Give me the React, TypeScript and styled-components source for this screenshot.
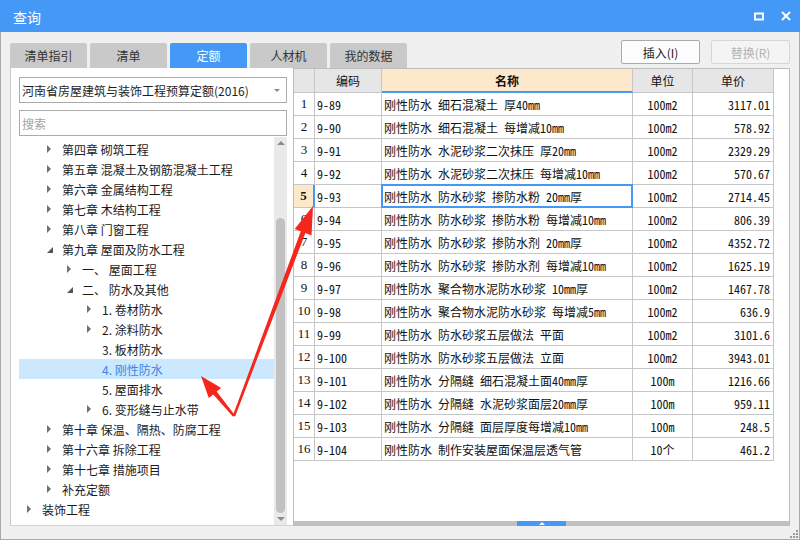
import React from 'react'
import styled, { createGlobalStyle, css } from 'styled-components'

const BLUE = '#4499f6'
const UI_FONT = `"Noto Sans CJK SC", "Noto Sans", sans-serif`
const GRID_FONT = `"Noto Sans Mono CJK SC", "Noto Sans CJK SC", monospace`
const LINE = '#c6c6c6'

const GlobalStyle = createGlobalStyle`
    html, body { margin: 0; padding: 0; background: #f0f0f0; }
    body { width: 800px; height: 540px; overflow: hidden; font-family: ${UI_FONT}; }
    * { box-sizing: border-box; }
`

const Window = styled.div`
    position: relative;
    width: 800px;
    height: 540px;
    display: flex;
    flex-direction: column;
    background: #f0f0f0;
    font-size: 12px;
    color: #1e1e1e;
`

const TitleBar = styled.div`
    height: 32px;
    flex: none;
    display: flex;
    align-items: center;
    padding: 0 9px 0 13px;
    background: ${BLUE};
    color: #fff;
    font-size: 14px;
`

const TitleText = styled.div`
    flex: 1;
    margin-top: 2px;
`

const TitleButtons = styled.div`
    display: flex;
    align-items: center;
    gap: 17px;
`

const Body = styled.div`
    flex: 1;
    display: flex;
    flex-direction: column;
    border: 1px solid #a9a9a9;
    border-top: none;
    padding: 0 9px 12px 9px;
`

const Toolbar = styled.div`
    height: 36px;
    flex: none;
    display: flex;
    align-items: flex-end;
`

const Tabs = styled.div`
    display: flex;
    gap: 3px;
`

const Tab = styled.div<{ $active?: boolean }>`
    width: 77px;
    height: 25px;
    display: flex;
    align-items: center;
    justify-content: center;
    font-size: 12px;
    background: ${p => (p.$active ? BLUE : '#c9c9c9')};
    color: ${p => (p.$active ? '#fff' : '#333')};
    border-radius: 2px 2px 0 0;
`

const Buttons = styled.div`
    margin-left: auto;
    align-self: flex-start;
    margin-top: 8px;
    display: flex;
    gap: 11px;
`

const Button = styled.div<{ $disabled?: boolean }>`
    width: 79px;
    height: 24px;
    display: flex;
    align-items: center;
    justify-content: center;
    font-size: 12px;
    border-radius: 2px;
    border: 1px solid ${p => (p.$disabled ? '#d6d6d6' : '#acacac')};
    background: ${p => (p.$disabled ? '#f4f4f4' : '#fdfdfd')};
    color: ${p => (p.$disabled ? '#b2b2b2' : '#222')};
`

const Content = styled.div`
    height: 458px;
    flex: none;
    display: flex;
`

const LeftPanel = styled.div`
    width: 283px;
    flex: none;
    display: flex;
    flex-direction: column;
    background: #fff;
    border-left: 1px solid #c8c8c8;
    border-bottom: 1px solid #d2d2d2;
    padding: 9px 6px 0 8px;
`

const Field = styled.div`
    height: 26px;
    flex: none;
    display: flex;
    align-items: center;
    justify-content: space-between;
    border: 1px solid #ababab;
    background: #fff;
    padding: 0 6px 0 2px;
    font-size: 12px;
`

const SearchField = styled(Field)`
    margin-top: 7px;
    color: #a4a4a4;
`

const Caret = styled.span`
    width: 0;
    height: 0;
    border-top: 3px solid #8a8a8a;
    border-left: 3px solid transparent;
    border-right: 3px solid transparent;
`

const Tree = styled.div`
    flex: 1;
    margin-top: 1px;
    display: flex;
    min-height: 0;
`

const TreeList = styled.div`
    flex: 1;
    padding-top: 2px;
    overflow: hidden;
`

const TreeRow = styled.div<{ $level: number; $selected?: boolean }>`
    height: 20px;
    display: flex;
    align-items: center;
    padding-left: ${p => 8 + p.$level * 20}px;
    white-space: nowrap;
    font-size: 12px;
    color: #1b1b1b;
    ${p =>
        p.$selected &&
        css`
            background: #cce8ff;
            color: #3f86e0;
        `}
`

const Toggle = styled.span<{ $state: 'open' | 'closed' | 'none' }>`
    width: 15px;
    flex: none;
    display: flex;
    align-items: center;
    &::before {
        content: '';
        width: 0;
        height: 0;
        ${p =>
            p.$state === 'closed' &&
            css`
                border-left: 4px solid #707070;
                border-top: 4px solid transparent;
                border-bottom: 4px solid transparent;
            `}
        ${p =>
            p.$state === 'open' &&
            css`
                margin-top: 2px;
                border-bottom: 6px solid #555;
                border-left: 6px solid transparent;
            `}
    }
`

const ScrollTrack = styled.div`
    width: 13px;
    flex: none;
    display: flex;
    flex-direction: column;
    align-items: center;
    background: #e9e9e9;
`

const ScrollArrow = styled.div<{ $down?: boolean }>`
    height: 12px;
    flex: none;
    display: flex;
    align-items: center;
    &::before {
        content: '';
        border-left: 4px solid transparent;
        border-right: 4px solid transparent;
        ${p =>
            p.$down
                ? css`border-top: 4px solid #8c8c8c;`
                : css`border-bottom: 4px solid #8c8c8c;`}
    }
`

const ScrollThumb = styled.div`
    width: 9px;
    height: 295px;
    margin-top: 69px;
    border-radius: 5px;
    background: #c1c1c1;
`

const ScrollRest = styled.div`
    flex: 1;
`

const RightPanel = styled.div`
    width: 497px;
    flex: none;
    display: flex;
    flex-direction: column;
    background: #fff;
    border: 1px solid #bdbdbd;
    border-bottom: none;
`

const GridRow = styled.div<{ $head?: boolean }>`
    display: grid;
    grid-template-columns: 21px 67px 251px 60px 81px;
    height: ${p => (p.$head ? 24 : 23)}px;
`

type Align = 'left' | 'center' | 'right'

const Cell = styled.div<{
    $align?: Align
    $head?: boolean
    $mark?: boolean
    $current?: boolean
    $num?: boolean
    $bold?: boolean
}>`
    position: relative;
    display: flex;
    align-items: center;
    justify-content: ${p => (p.$align === 'center' ? 'center' : p.$align === 'right' ? 'flex-end' : 'flex-start')};
    padding: ${p => (p.$align === 'right' ? '0 3px 0 2px' : '0 2px')};
    border-right: 1px solid ${LINE};
    border-bottom: 1px solid ${LINE};
    white-space: nowrap;
    overflow: visible;
    font-family: ${p => (p.$head ? UI_FONT : p.$num ? `"Liberation Serif", serif` : GRID_FONT)};
    font-size: ${p => (p.$num ? 13 : 12)}px;
    font-weight: ${p => (p.$bold ? 700 : 400)};
    color: #111;
    background: ${p => (p.$mark ? '#fee8cc' : p.$head ? '#e6e6e6' : '#fff')};
    ${p =>
        p.$current &&
        css`
            &::after {
                content: '';
                position: absolute;
                top: -1px;
                left: -1px;
                right: -1px;
                bottom: -1px;
                border: 2px solid ${BLUE};
            }
        `}
`

const NameHead = styled(Cell)`
    border-bottom: 2px solid ${BLUE};
`

const RowNum = styled(Cell)<{ $active?: boolean }>`
    border-right-color: ${p => (p.$active ? BLUE : LINE)};
    ${p => p.$active && css`border-right-width: 2px;`}
`

const Filler = styled.div`
    flex: 1;
`

const Splitter = styled.div`
    height: 5px;
    flex: none;
    display: flex;
    justify-content: center;
    background: #c0c0c0;
`

const SplitHandle = styled.div`
    width: 49px;
    display: flex;
    align-items: center;
    justify-content: center;
    background: ${BLUE};
    &::before {
        content: '';
        border-left: 3px solid transparent;
        border-right: 3px solid transparent;
        border-bottom: 3px solid #fff;
    }
`

const Overlay = styled.svg`
    position: absolute;
    left: 0;
    top: 0;
    pointer-events: none;
`

const Grip = styled.svg`
    position: absolute;
    right: 2px;
    bottom: 2px;
`

type Node = { label: string; level: number; state: 'open' | 'closed' | 'none'; selected?: boolean }

const tree: Node[] = [
    { label: '第四章 砌筑工程', level: 1, state: 'closed' },
    { label: '第五章 混凝土及钢筋混凝土工程', level: 1, state: 'closed' },
    { label: '第六章 金属结构工程', level: 1, state: 'closed' },
    { label: '第七章 木结构工程', level: 1, state: 'closed' },
    { label: '第八章 门窗工程', level: 1, state: 'closed' },
    { label: '第九章 屋面及防水工程', level: 1, state: 'open' },
    { label: '一、 屋面工程', level: 2, state: 'closed' },
    { label: '二、 防水及其他', level: 2, state: 'open' },
    { label: '1. 卷材防水', level: 3, state: 'closed' },
    { label: '2. 涂料防水', level: 3, state: 'closed' },
    { label: '3. 板材防水', level: 3, state: 'none' },
    { label: '4. 刚性防水', level: 3, state: 'none', selected: true },
    { label: '5. 屋面排水', level: 3, state: 'none' },
    { label: '6. 变形缝与止水带', level: 3, state: 'closed' },
    { label: '第十章 保温、隔热、防腐工程', level: 1, state: 'closed' },
    { label: '第十六章 拆除工程', level: 1, state: 'closed' },
    { label: '第十七章 措施项目', level: 1, state: 'closed' },
    { label: '补充定额', level: 1, state: 'closed' },
    { label: '装饰工程', level: 0, state: 'closed' },
]

const rows: [string, string, string, string][] = [
    ['9-89', '刚性防水 细石混凝土 厚40mm', '100m2', '3117.01'],
    ['9-90', '刚性防水 细石混凝土 每增减10mm', '100m2', '578.92'],
    ['9-91', '刚性防水 水泥砂浆二次抹压 厚20mm', '100m2', '2329.29'],
    ['9-92', '刚性防水 水泥砂浆二次抹压 每增减10mm', '100m2', '570.67'],
    ['9-93', '刚性防水 防水砂浆 掺防水粉 20mm厚', '100m2', '2714.45'],
    ['9-94', '刚性防水 防水砂浆 掺防水粉 每增减10mm', '100m2', '806.39'],
    ['9-95', '刚性防水 防水砂浆 掺防水剂 20mm厚', '100m2', '4352.72'],
    ['9-96', '刚性防水 防水砂浆 掺防水剂 每增减10mm', '100m2', '1625.19'],
    ['9-97', '刚性防水 聚合物水泥防水砂浆 10mm厚', '100m2', '1467.78'],
    ['9-98', '刚性防水 聚合物水泥防水砂浆 每增减5mm', '100m2', '636.9'],
    ['9-99', '刚性防水 防水砂浆五层做法 平面', '100m2', '3101.6'],
    ['9-100', '刚性防水 防水砂浆五层做法 立面', '100m2', '3943.01'],
    ['9-101', '刚性防水 分隔缝 细石混凝土面40mm厚', '100m', '1216.66'],
    ['9-102', '刚性防水 分隔缝 水泥砂浆面层20mm厚', '100m', '959.11'],
    ['9-103', '刚性防水 分隔缝 面层厚度每增减10mm', '100m', '248.5'],
    ['9-104', '刚性防水 制作安装屋面保温层透气管', '10个', '461.2'],
]

const CURRENT = 4

const App = () => {
    return (
        <>
            <GlobalStyle />
            <Window>
                <TitleBar>
                    <TitleText>查询</TitleText>
                    <TitleButtons>
                        <svg width="10" height="9" viewBox="0 0 10 9">
                            <rect x="1" y="1.5" width="8" height="6" fill="none" stroke="#fff" strokeWidth="2" />
                        </svg>
                        <svg width="10" height="10" viewBox="0 0 10 10">
                            <path d="M1 1 L9 9 M9 1 L1 9" stroke="#fff" strokeWidth="2" />
                        </svg>
                    </TitleButtons>
                </TitleBar>
                <Body>
                    <Toolbar>
                        <Tabs>
                            <Tab>清单指引</Tab>
                            <Tab>清单</Tab>
                            <Tab $active>定额</Tab>
                            <Tab>人材机</Tab>
                            <Tab>我的数据</Tab>
                        </Tabs>
                        <Buttons>
                            <Button>插入(I)</Button>
                            <Button $disabled>替换(R)</Button>
                        </Buttons>
                    </Toolbar>
                    <Content>
                        <LeftPanel>
                            <Field>
                                <span>河南省房屋建筑与装饰工程预算定额(2016)</span>
                                <Caret />
                            </Field>
                            <SearchField>搜索</SearchField>
                            <Tree>
                                <TreeList>
                                    {tree.map(n => (
                                        <TreeRow key={n.label} $level={n.level} $selected={n.selected}>
                                            <Toggle $state={n.state} />
                                            {n.label}
                                        </TreeRow>
                                    ))}
                                </TreeList>
                                <ScrollTrack>
                                    <ScrollArrow />
                                    <ScrollThumb />
                                    <ScrollRest />
                                    <ScrollArrow $down />
                                </ScrollTrack>
                            </Tree>
                        </LeftPanel>
                        <RightPanel>
                            <GridRow $head>
                                <Cell $head />
                                <Cell $head $align="center">编码</Cell>
                                <NameHead $head $mark $bold $align="center">名称</NameHead>
                                <Cell $head $align="center">单位</Cell>
                                <Cell $head $align="center">单价</Cell>
                            </GridRow>
                            {rows.map((r, i) => (
                                <GridRow key={r[0]}>
                                    <RowNum $num $align="center" $mark={i === CURRENT} $bold={i === CURRENT} $active={i === CURRENT}>
                                        {i + 1}
                                    </RowNum>
                                    <Cell>{r[0]}</Cell>
                                    <Cell $current={i === CURRENT}>{r[1]}</Cell>
                                    <Cell $align="center">{r[2]}</Cell>
                                    <Cell $align="right">{r[3]}</Cell>
                                </GridRow>
                            ))}
                            <Filler />
                            <Splitter>
                                <SplitHandle />
                            </Splitter>
                        </RightPanel>
                    </Content>
                </Body>
                <Overlay width="800" height="540" viewBox="0 0 800 540">
                    <polygon
                        fill="#f5261c"
                        points="232.9,415.6 300.8,231.3 294.7,229.0 313,206 311.5,235.4 305.4,233.1 235.1,416.4"
                    />
                    <polygon
                        fill="#f5261c"
                        points="233.1,416.8 213.3,394.4 208.8,398.1 201,376 221.2,387.9 216.7,391.6 234.9,415.2"
                    />
                </Overlay>
                <Grip width="8" height="8" viewBox="0 0 8 8">
                    <g fill="#9a9a9a">
                        <rect x="6" y="0" width="2" height="2" />
                        <rect x="3" y="3" width="2" height="2" />
                        <rect x="6" y="3" width="2" height="2" />
                        <rect x="0" y="6" width="2" height="2" />
                        <rect x="3" y="6" width="2" height="2" />
                        <rect x="6" y="6" width="2" height="2" />
                    </g>
                </Grip>
            </Window>
        </>
    )
}

export default App
